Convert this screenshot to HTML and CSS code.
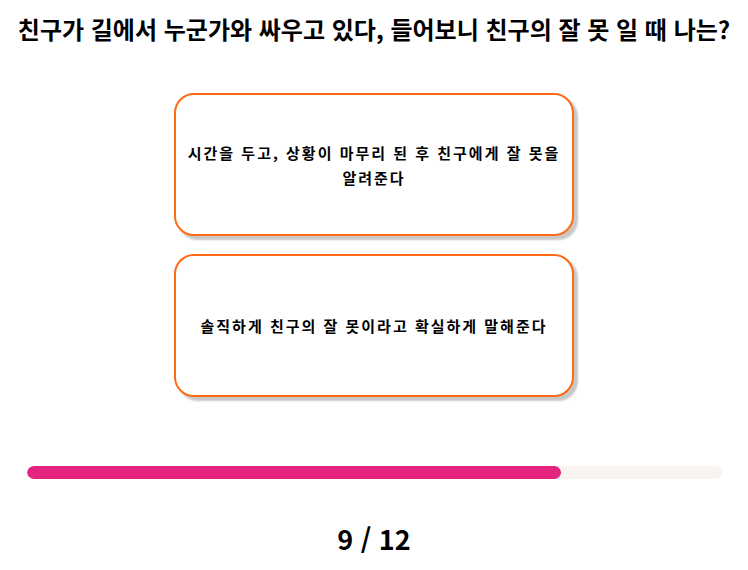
FILE: index.html
```html
<!DOCTYPE html>
<html lang="ko">
    <head>
        <meta charset="UTF-8" />
        <meta name="viewport" content="width=device-width, initial-scale=1.0" />
        <title>테스트</title>
        <link rel="stylesheet" href="styles.css">
    </head>
    <body>
        <div class="quiz">
            <!-- 질문 -->
            <h1 class="question">친구가 길에서 누군가와 싸우고 있다, 들어보니 친구의 잘 못 일 때 나는?</h1>
            <!-- 선택지 -->
            <div class="answers">
                <button class="answer">시간을 두고, 상황이 마무리 된 후 친구에게 잘 못을 알려준다</button>
                <button class="answer">솔직하게 친구의 잘 못이라고 확실하게 말해준다</button>
            </div>
            <!-- 진행바 -->
            <div class="progress">
                <div class="progress-fill" style="width: 76.8%"></div>
            </div>
            <div class="count">9 / 12</div>
        </div>
    </body>
</html>
```
FILE: styles.css
```css
* {
    margin: unset;
    padding: unset;
    box-sizing: border-box;
}
body {
    font-family: "Noto Sans CJK KR", "Noto Sans", sans-serif;
    color: #000;
    background: #fff;
}
.quiz {
    display: flex;
    flex-direction: column;
    align-items: center;
    padding-top: 12px;
}
.question {
    font-size: 24px;
    font-weight: 700;
    line-height: 34px;
    text-align: center;
    white-space: nowrap;
}
.answers {
    display: flex;
    flex-direction: column;
    gap: 18px;
    margin-top: 47px;
}
.answer {
    width: 400px;
    height: 143px;
    padding: 0 10px;
    border: 2px solid #ff6a13;
    border-radius: 20px;
    background: #fff;
    box-shadow: 4px 4px 2px #c8c8c8;
    font-family: inherit;
    font-size: 15px;
    font-weight: 700;
    letter-spacing: 2px;
    line-height: 25px;
    color: #000;
    cursor: pointer;
}
.progress {
    align-self: stretch;
    margin: 69px 26px 0 27px;
    height: 13px;
    border-radius: 7px;
    background: #f8f5f0;
    overflow: hidden;
}
.progress-fill {
    height: 100%;
    border-radius: 7px;
    background: #e4247e;
}
.count {
    margin-top: 44px;
    font-size: 27px;
    font-weight: 700;
    line-height: 32px;
}
```
